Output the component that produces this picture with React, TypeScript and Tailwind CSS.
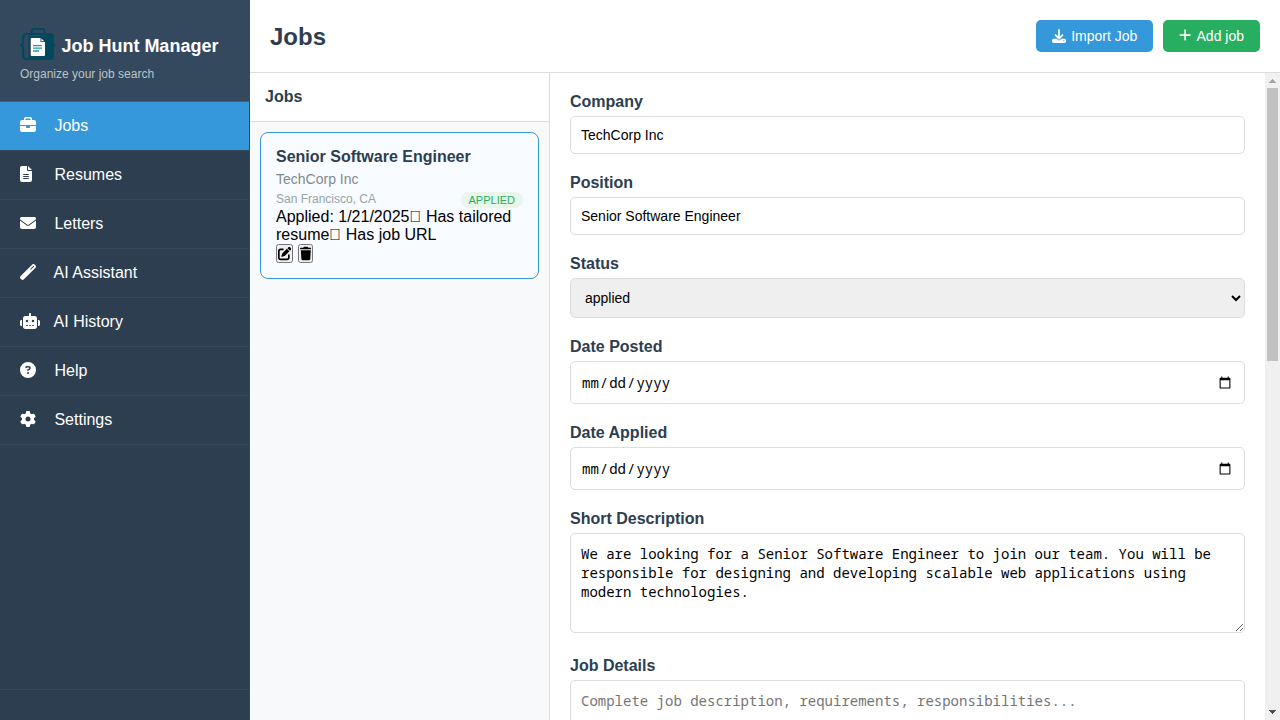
import type { ComponentType, ReactNode } from 'react';
import {
  FaBriefcase,
  FaCircleQuestion,
  FaDownload,
  FaEnvelope,
  FaFileLines,
  FaGear,
  FaPenToSquare,
  FaPlus,
  FaRobot,
  FaTrash,
  FaWandMagic,
} from 'react-icons/fa6';

type NavEntry = {
  label: string;
  Icon: ComponentType<{ className?: string }>;
  iconClass: string;
  active?: boolean;
};

const NAV: NavEntry[] = [
  { label: 'Jobs', Icon: FaBriefcase, iconClass: 'h-4 w-4', active: true },
  { label: 'Resumes', Icon: FaFileLines, iconClass: 'h-4 w-3' },
  { label: 'Letters', Icon: FaEnvelope, iconClass: 'h-4 w-4' },
  { label: 'AI Assistant', Icon: FaWandMagic, iconClass: 'h-4 w-4' },
  { label: 'AI History', Icon: FaRobot, iconClass: 'h-4 w-5' },
  { label: 'Help', Icon: FaCircleQuestion, iconClass: 'h-4 w-4' },
  { label: 'Settings', Icon: FaGear, iconClass: 'h-4 w-4' },
];

const DESCRIPTION =
  'We are looking for a Senior Software Engineer to join our team. You will be responsible for designing and developing scalable web applications using modern technologies.';

function Logo() {
  return (
    <svg viewBox="0 0 36 32" className="h-8 w-9 shrink-0">
      <path d="M11.7 5V3c0-1.300.7-2 2-2h8.800c1.300 0 2 .7 2 2v2" fill="none" stroke="#03485c" strokeWidth="2" />
      <path d="M20 5h10.500c2 0 3.300 1.200 3.300 3.300v5.200c0 1.700.6 2.800 2.200 3.700-1.600.9-2.200 2-2.200 3.700V28.700c0 2.100-1.300 3.300-3.300 3.300H20z" fill="#03485c" />
      <path
        d="M31 6H6.500C4.400 6 3.200 7.200 3.200 9.300V14c0 1.500-.7 2.700-2.300 3.300 1.600.7 2.300 1.800 2.300 3.300v7.100c0 2.100 1.200 3.300 3.300 3.300H31"
        fill="none"
        stroke="#03485c"
        strokeWidth="2.200"
      />
      <path d="M9.300 8.700h13.200l4 4V29H9.300z" fill="none" stroke="#03485c" strokeWidth="1.500" />
      <path d="M11.800 10h8.700v4h4.500v12.900a1 1 0 0 1-1 1H11.800a1 1 0 0 1-1-1V11a1 1 0 0 1 1-1z" fill="#fff" />
      <path d="M21.300 10.400v2.900h3z" fill="#fff" />
      <path d="M13 17.700h8.800M13 20.200h9M13 23h6" fill="none" stroke="#1f9bab" strokeWidth="1.300" />
    </svg>
  );
}

function Sidebar() {
  return (
    <aside className="flex w-[250px] shrink-0 flex-col border-r border-[#34495e] bg-[#2c3e50] text-white">
      <div className="h-[102px] shrink-0 border-b border-[#4a5f7a] bg-[#34495e] px-5 pt-7">
        <div className="flex h-8 items-center gap-[5.4px]">
          <Logo />
          <h1 className="pt-1 text-lg leading-[21px] font-bold whitespace-nowrap">Job Hunt Manager</h1>
        </div>
        <p className="mt-[7px] text-xs leading-[14px] text-[#bdc3c7]">Organize your job search</p>
      </div>
      <nav className="flex flex-col">
        {NAV.map(({ label, Icon, iconClass, active }) => (
          <a
            key={label}
            className={
              active
                ? 'flex h-[49px] items-center border-b border-[#34495e] bg-[#3498db] px-5'
                : 'flex h-[49px] items-center border-b border-[#34495e] px-5 text-white'
            }
          >
            <span className="mr-2.5 mb-0.5 w-5 text-white">
              <Icon className={iconClass} />
            </span>
            <span className="leading-[18px] whitespace-pre">{` ${label}`}</span>
          </a>
        ))}
      </nav>
      <div className="mt-auto h-[31px] border-t border-[#34495e]" />
    </aside>
  );
}

function JobList() {
  return (
    <section className="flex w-[300px] shrink-0 flex-col border-r border-[#ddd] bg-[#f8f9fa]">
      <div className="h-[49px] border-b border-[#ddd] bg-white px-[15px] pt-[15px]">
        <h3 className="leading-[18px] font-bold text-[#2c3e50]">Jobs</h3>
      </div>
      <div className="p-2.5">
        <article className="h-[147px] rounded-lg border border-[#3498db] bg-[#f8fbff] p-[15px]">
          <h4 className="leading-[18px] font-bold text-[#2c3e50]">Senior Software Engineer</h4>
          <p className="mt-[5px] text-sm leading-4 text-[#7f8c8d]">TechCorp Inc</p>
          <div className="mt-[5px] flex justify-between text-xs leading-[14px] text-[#95a5a6]">
            <span>San Francisco, CA</span>
            <span className="-mb-1 h-4 rounded-xl bg-[#e8f5e8] px-2 py-px text-[11px] leading-[14px] text-[#27ae60]">
              APPLIED
            </span>
          </div>
          <div className="mt-0.5 leading-[18px] text-black">
            {'Applied: 1/21/2025\uf15c Has tailored resume\uf0c1 Has job URL'}
          </div>
          <div className="flex gap-[4.4px]">
            <button className="[background:revert] [border-radius:revert] [border:revert] p-0 text-[13.33px]">
              <FaPenToSquare className="h-[15px] w-[13.33px] text-black" />
            </button>
            <button className="[background:revert] [border-radius:revert] [border:revert] p-0 text-[13.33px]">
              <FaTrash className="h-[15px] w-[11.67px] text-black" />
            </button>
          </div>
        </article>
      </div>
    </section>
  );
}

function Field({ label, children }: { label: string; children: ReactNode }) {
  return (
    <div className="mb-5 flex flex-col">
      <label className="mb-[5px] leading-[18px] font-bold text-[#2c3e50]">{label}</label>
      {children}
    </div>
  );
}

function ScrollRail() {
  return (
    <div className="flex w-[15px] shrink-0 flex-col items-center bg-[#f0f0f0]">
      <svg viewBox="0 0 15 15" className="size-[15px] shrink-0" shapeRendering="crispEdges">
        <path d="M7 6h1v1h1v1h1v1h1v1H4V9h1V8h1V7h1z" fill="#a3a3a3" />
      </svg>
      <div className="ml-[2px] h-[273px] w-[11px] self-start bg-[#c1c1c1]" />
      <svg viewBox="0 0 15 15" className="mt-auto size-[15px] shrink-0" shapeRendering="crispEdges">
        <path d="M4 5h7v1h-1v1H9v1H8v1H7V8H6V7H5V6H4z" fill="#505050" />
      </svg>
    </div>
  );
}

function JobForm() {
  return (
    <section className="flex min-w-0 flex-1 overflow-hidden bg-white">
      <form className="min-w-0 flex-1 p-5 text-black">
        <Field label="Company">
          <input className="h-[38px] rounded-[5px] border border-[#ddd] px-2.5 text-sm" defaultValue="TechCorp Inc" />
        </Field>
        <Field label="Position">
          <input
            className="h-[38px] rounded-[5px] border border-[#ddd] px-2.5 text-sm"
            defaultValue="Senior Software Engineer"
          />
        </Field>
        <Field label="Status">
          <select className="h-10 rounded-[5px] border border-[#ddd] bg-[#efefef] p-2.5 text-sm" defaultValue="applied">
            <option>applied</option>
          </select>
        </Field>
        <Field label="Date Posted">
          <input
            type="date"
            className="h-[43px] rounded-[5px] border border-[#ddd] px-2.5 font-['Noto_Sans_Mono',monospace] text-sm"
          />
        </Field>
        <Field label="Date Applied">
          <input
            type="date"
            className="h-[43px] rounded-[5px] border border-[#ddd] px-2.5 font-['Noto_Sans_Mono',monospace] text-sm"
          />
        </Field>
        <Field label="Short Description">
          <textarea
            className="mb-1 h-[100px] rounded-[5px] border border-[#ddd] p-2.5 font-['Noto_Sans_Mono',monospace] text-sm leading-[19px]"
            defaultValue={DESCRIPTION}
          />
        </Field>
        <Field label="Job Details">
          <textarea
            className="h-[200px] rounded-[5px] border border-[#ddd] p-2.5 font-['Noto_Sans_Mono',monospace] text-sm leading-[19px] placeholder:text-[#757575]"
            placeholder="Complete job description, requirements, responsibilities..."
          />
        </Field>
      </form>
      <ScrollRail />
    </section>
  );
}

export default function App() {
  return (
    <div className="flex h-screen overflow-hidden font-['Liberation_Sans',sans-serif] text-base">
      <Sidebar />
      <main className="flex min-w-0 flex-1 flex-col">
        <header className="flex h-[73px] shrink-0 items-center justify-between border-b border-[#ddd] bg-white px-5">
          <h2 className="text-2xl leading-[27px] font-bold text-[#2c3e50]">Jobs</h2>
          <div className="flex gap-2.5 text-sm text-white">
            <button className="flex h-8 items-center gap-[5px] rounded-[5px] bg-[#3498db] px-4">
              <FaDownload className="size-3.5" />
              <span>Import Job</span>
            </button>
            <button className="flex h-8 items-center gap-[5px] rounded-[5px] bg-[#27ae60] px-4">
              <FaPlus className="mb-0.5 h-3.5 w-[12.25px]" />
              <span>Add job</span>
            </button>
          </div>
        </header>
        <div className="flex min-h-0 flex-1">
          <JobList />
          <JobForm />
        </div>
      </main>
    </div>
  );
}
